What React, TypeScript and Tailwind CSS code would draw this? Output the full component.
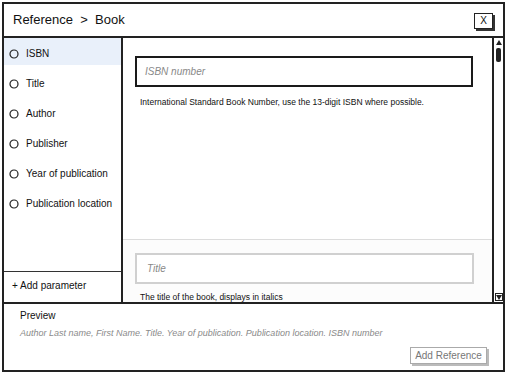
import React from "react";

const items = ["ISBN", "Title", "Author", "Publisher", "Year of publication", "Publication location"];

function Circle() {
  return (
    <svg width="10" height="10" viewBox="0 0 10 10" className="shrink-0">
      <circle cx="5" cy="5" r="4" fill="none" stroke="#222" strokeWidth="1.2" />
    </svg>
  );
}

export default function App() {
  return (
    <div className="w-[507px] h-[375px] bg-white pt-[2px] pl-[2px]" style={{ fontFamily: '"Liberation Sans", Arial, sans-serif' }}>
      <div className="w-[503px] h-[370px] border-2 border-[#222] flex flex-col text-[#111]">
        {/* header */}
        <div className="h-[34px] shrink-0 border-b-2 border-[#222] flex items-center justify-between pl-[9px] pr-[10px]">
          <span className="text-[13px]">Reference &nbsp;&gt;&nbsp; Book</span>
          <div className="relative w-[19px] h-[16px] mt-[1px]">
            <div className="absolute left-[2px] top-[2px] w-[19px] h-[16px] bg-[#333]" />
            <div className="absolute inset-0 border border-[#222] bg-white flex items-center justify-center text-[10px]">X</div>
          </div>
        </div>
        {/* body */}
        <div className="flex h-[264px] shrink-0">
          <div className="w-[119px] shrink-0 border-r-2 border-[#222] flex flex-col">
            <div className="flex-1 flex flex-col">
              {items.map((it, i) => (
                <div key={it} className={`h-[30px] flex items-center gap-[7px] pl-[5px] pt-[1px] text-[10px] ${i === 0 ? "bg-[linear-gradient(#e9f0fa_27px,transparent_27px)]" : ""}`}>
                  <Circle />
                  <span>{it}</span>
                </div>
              ))}
            </div>
            <div className="h-[31px] border-t border-[#333] flex items-center pl-[8px] pb-[3px] text-[10px]">+ Add parameter</div>
          </div>
          <div className="flex-1 flex flex-col overflow-hidden">
            <div className="h-[202px] shrink-0 pl-[12px] pr-[19px] pt-[18px] border-b border-[#dcdcdc]">
              <div className="h-[31px] border-2 border-[#1a1a1a] flex items-center pl-[8px] italic text-[10px] text-[#888]">ISBN number</div>
              <div className="mt-[9px] pl-[5px] text-[8.5px] text-[#111]">International Standard Book Number, use the 13-digit ISBN where possible.</div>
            </div>
            <div className="flex-1 pl-[12px] pr-[18px] pt-[13px] bg-[#fcfcfc] overflow-hidden">
              <div className="h-[31px] border-2 border-[#d0d0d0] bg-white flex items-center pl-[10px] italic text-[10px] text-[#888]">Title</div>
              <div className="mt-[7px] pl-[5px] text-[8.5px] leading-[12px] text-[#111] whitespace-nowrap">The title of the book, displays in italics</div>
            </div>
          </div>
          <div className="w-[11px] shrink-0 border-l-2 border-[#222] flex flex-col justify-between items-center py-[1px]">
            <div className="flex flex-col items-center">
              <svg width="8" height="7" viewBox="0 0 8 7"><polygon points="1,6 7,6 4,1" fill="#222" /></svg>
              <div className="w-[5px] h-[14px] bg-[#222] rounded-[2px] mt-[2px]" />
            </div>
            <div className="w-[8px] h-[8px] border border-[#222] flex items-center justify-center">
              <svg width="6" height="5" viewBox="0 0 6 5"><polygon points="0,0 6,0 3,5" fill="#222" /></svg>
            </div>
          </div>
        </div>
        {/* footer */}
        <div className="flex-1 border-t-2 border-[#222] pl-[16px] pr-[16px] flex flex-col">
          <div className="mt-[4px] text-[10px]">Preview</div>
          <div className="mt-[4px] italic text-[9px] text-[#8a8a8a]">Author Last name, First Name. Title. Year of publication. Publication location. ISBN number</div>
          <div className="flex justify-end mt-[6px]">
            <div className="relative w-[77px] h-[17px]">
              <div className="absolute left-[2px] top-[2px] w-[77px] h-[17px] bg-[#bbb]" />
              <div className="absolute inset-0 border border-[#aaa] bg-white flex items-center justify-center text-[10px] text-[#777]">Add Reference</div>
            </div>
          </div>
        </div>
      </div>
    </div>
  );
}
